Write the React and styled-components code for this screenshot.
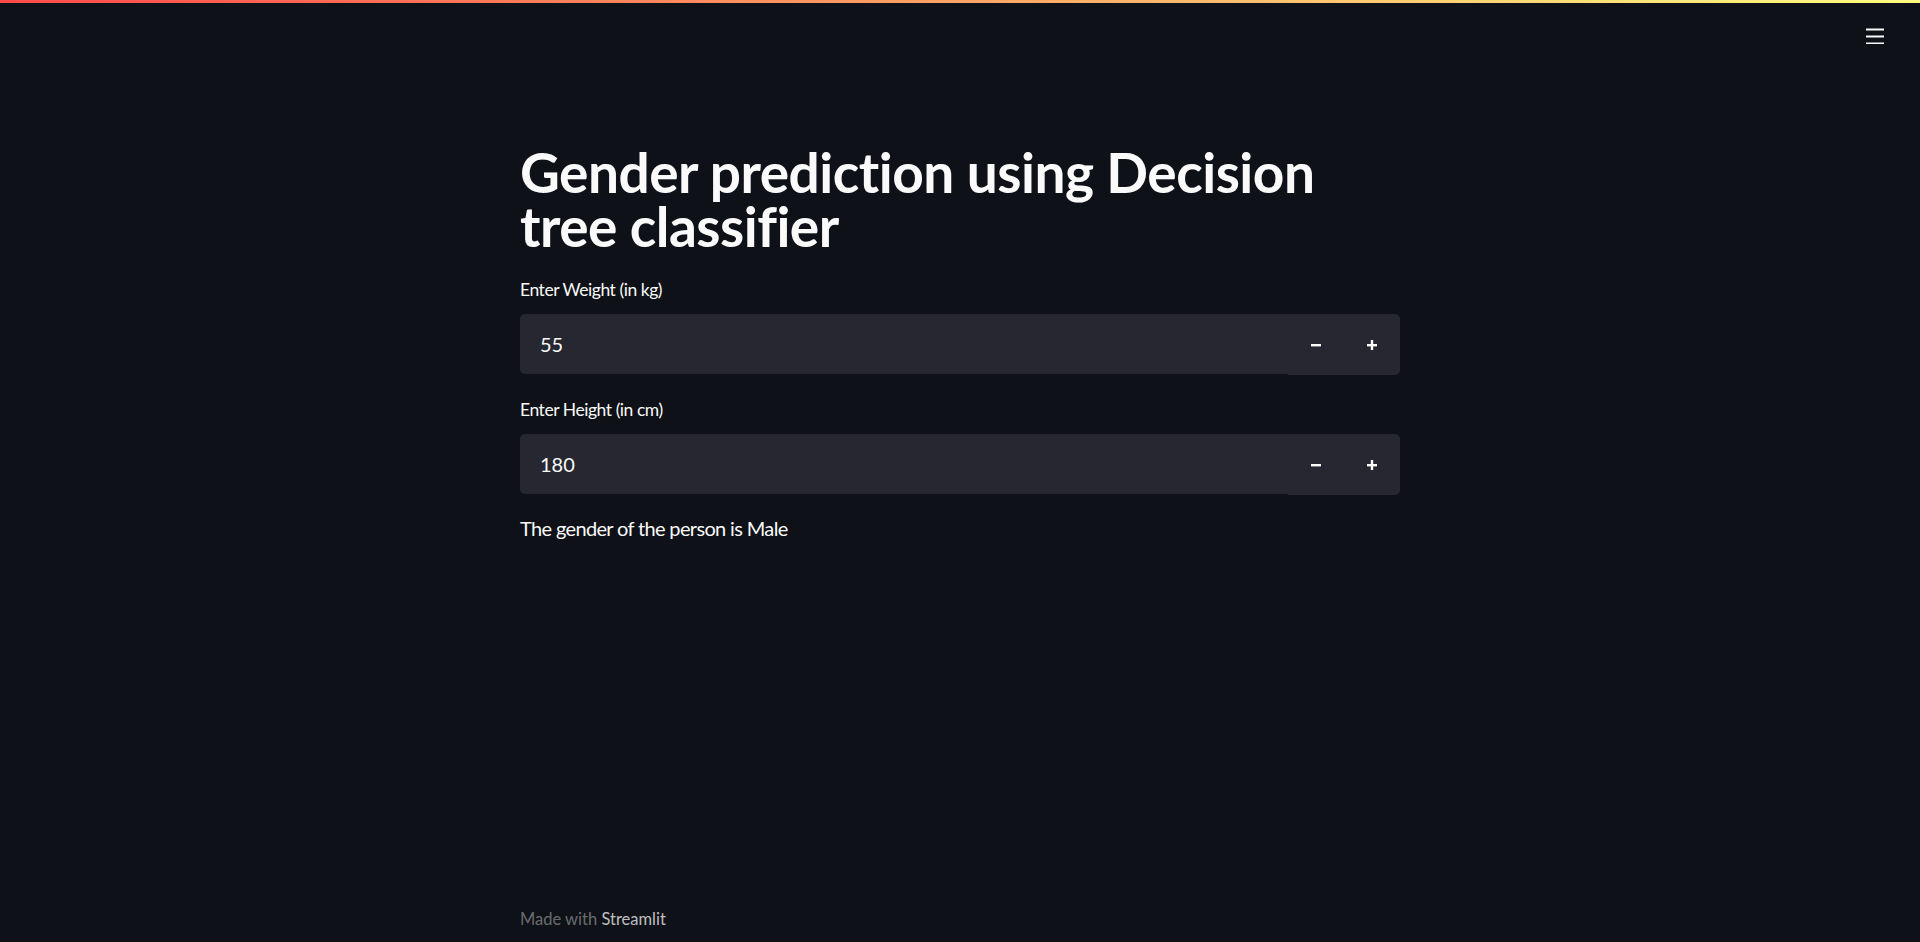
import React from "react";
import styled, { createGlobalStyle } from "styled-components";

const GlobalStyle = createGlobalStyle`
  html, body {
    margin: 0;
    padding: 0;
    background: #0e1117;
  }
  body {
    font-family: Lato, "Noto Sans", sans-serif;
    color: #fafafa;
  }
  * { box-sizing: border-box; }
`;

const Page = styled.div`
  min-height: 100vh;
  display: flex;
  flex-direction: column;
  background: #0e1117;
`;

const Decoration = styled.div`
  height: 3px;
  background: linear-gradient(90deg, #ff4b4b, #fffd80);
`;

const Header = styled.header`
  height: 66px;
  display: flex;
  align-items: center;
  justify-content: flex-end;
  padding-right: 36px;
`;

const MenuButton = styled.button`
  background: none;
  border: none;
  padding: 0;
  display: flex;
  color: #fafafa;
  cursor: pointer;
`;

const Main = styled.main`
  flex: 1;
  width: 880px;
  margin: 0 auto;
  padding-top: 76px;
  display: flex;
  flex-direction: column;
`;

const Title = styled.h1`
  margin: 0 0 23px 0;
  font-size: 55px;
  font-weight: 700;
  line-height: 54px;
  letter-spacing: -0.5px;
  color: #fafafa;
`;

const Field = styled.div`
  display: flex;
  flex-direction: column;
  margin-bottom: ${(p) => p.$gap}px;
`;

const Label = styled.label`
  font-size: 17.5px;
  line-height: 28px;
  letter-spacing: -0.45px;
  color: #fafafa;
  margin-bottom: 10px;
`;

const InputRow = styled.div`
  display: flex;
  align-items: flex-start;
`;

const Input = styled.input`
  flex: 1;
  height: 60px;
  border: none;
  outline: none;
  background: #262730;
  color: #fafafa;
  font-family: inherit;
  font-size: 20px;
  padding: 0 20px;
  border-radius: 5px 0 0 5px;
`;

const Steppers = styled.div`
  display: flex;
  height: 61px;
  background: #262730;
  border-radius: 0 5px 5px 0;
`;

const StepButton = styled.button`
  width: 56px;
  height: 100%;
  background: none;
  border: none;
  color: #fafafa;
  display: flex;
  align-items: center;
  justify-content: center;
  padding: 0;
  cursor: pointer;
`;

const Result = styled.p`
  margin: 0;
  font-size: 20px;
  line-height: 32px;
  letter-spacing: -0.65px;
  color: #fafafa;
`;

const Footer = styled.footer`
  width: 880px;
  margin: 0 auto;
  padding-bottom: 10px;
  font-size: 16.5px;
  line-height: 26px;
  color: rgba(250, 250, 250, 0.4);
`;

const FooterLink = styled.a`
  color: rgba(250, 250, 250, 0.75);
  text-decoration: none;
`;

const MinusIcon = () => (
  <svg width="10" height="10" viewBox="0 0 10 10">
    <rect x="0" y="4" width="10" height="2.4" fill="currentColor" />
  </svg>
);

const PlusIcon = () => (
  <svg width="10" height="10" viewBox="0 0 10 10">
    <rect x="0" y="4" width="10" height="2.4" fill="currentColor" />
    <rect x="3.8" y="0" width="2.4" height="10" fill="currentColor" />
  </svg>
);

const NumberField = ({ label, value, gap }) => (
  <Field $gap={gap}>
    <Label>{label}</Label>
    <InputRow>
      <Input type="text" defaultValue={value} />
      <Steppers>
        <StepButton aria-label="decrement">
          <MinusIcon />
        </StepButton>
        <StepButton aria-label="increment">
          <PlusIcon />
        </StepButton>
      </Steppers>
    </InputRow>
  </Field>
);

export default function App() {
  return (
    <>
      <GlobalStyle />
      <Page>
        <Decoration />
        <Header>
          <MenuButton aria-label="menu">
            <svg width="18" height="16" viewBox="0 0 18 16">
              <rect x="0" y="0.5" width="18" height="2" fill="currentColor" />
              <rect x="0" y="7.5" width="18" height="2" fill="currentColor" />
              <rect x="0" y="14.5" width="18" height="2" fill="currentColor" />
            </svg>
          </MenuButton>
        </Header>
        <Main>
          <Title>Gender prediction using Decision tree classifier</Title>
          <NumberField label="Enter Weight (in kg)" value="55" gap={21} />
          <NumberField label="Enter Height (in cm)" value="180" gap={17} />
          <Result>The gender of the person is Male</Result>
        </Main>
        <Footer>
          Made with <FooterLink href="#">Streamlit</FooterLink>
        </Footer>
      </Page>
    </>
  );
}
